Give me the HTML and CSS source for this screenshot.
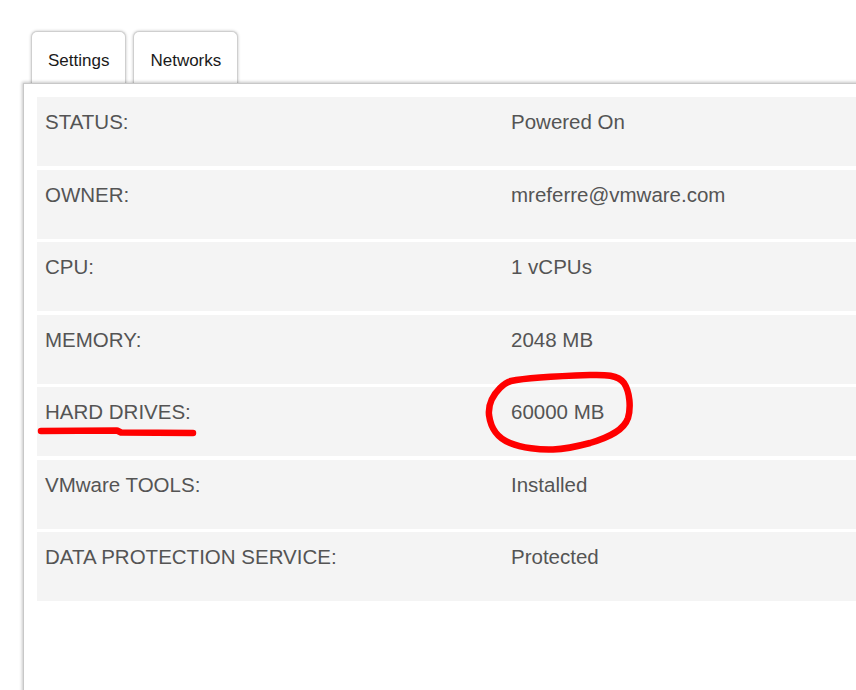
FILE: index.html
```html
<!DOCTYPE html>
<html>
<head>
<meta charset="utf-8">
<link rel="stylesheet" href="styles.css">
</head>
<body>
<div class="page">
  <div class="tabs">
    <div class="tab active">Settings</div>
    <div class="tab">Networks</div>
  </div>
  <div class="panel">
    <div class="rows">
      <div class="row"><div class="label">STATUS:</div><div class="value">Powered On</div></div>
      <div class="row"><div class="label">OWNER:</div><div class="value">mreferre@vmware.com</div></div>
      <div class="row"><div class="label">CPU:</div><div class="value">1 vCPUs</div></div>
      <div class="row"><div class="label">MEMORY:</div><div class="value">2048 MB</div></div>
      <div class="row"><div class="label">HARD DRIVES:</div><div class="value">60000 MB</div></div>
      <div class="row"><div class="label">VMware TOOLS:</div><div class="value">Installed</div></div>
      <div class="row"><div class="label">DATA PROTECTION SERVICE:</div><div class="value">Protected</div></div>
    </div>
  </div>
  <svg class="marks" width="856" height="690" viewBox="0 0 856 690">
    <path d="M41 431 L117 430.5 L121 432.5 L193 433" fill="none" stroke="#ff0000" stroke-width="6.5" stroke-linecap="round" stroke-linejoin="round"/>
    <path d="M511 381 C525 378 560 376 590 375 C605 374.5 618 375 624 383 C630 392 631 408 628 418 C624 430 610 437 590 443 C575 447 565 449 553 449.5 C540 450 522 448 510 443 C498 438 491 430 489 415 C488 404 492 396 500 388 C504 384 507 382 511 381 Z" fill="none" stroke="#ff0000" stroke-width="6.5" stroke-linejoin="round"/>
  </svg>
</div>
</body>
</html>
```

FILE: styles.css
```css
html, body {
  margin: 0;
  padding: 0;
  background: #ffffff;
  overflow: hidden;
}
.page {
  position: relative;
  width: 856px;
  height: 690px;
  overflow: hidden;
  font-family: "Liberation Sans", Arial, Helvetica, sans-serif;
}
.tabs {
  display: flex;
  gap: 7px;
  padding: 31px 0 0 31px;
  height: 52px;
  box-sizing: content-box;
}
.tab {
  box-sizing: border-box;
  height: 53px;
  padding: 19px 16px 0 16px;
  border: 1px solid #cfcfcf;
  border-bottom: none;
  border-radius: 6px 6px 0 0;
  background: #ffffff;
  box-shadow: 0 0 3px rgba(0, 0, 0, 0.25);
  font-size: 17px;
  line-height: 20px;
  color: #1a1a1a;
}
.panel {
  position: relative;
  margin-left: 23px;
  width: 900px;
  height: 620px;
  background: #ffffff;
  border-top: 1px solid #c8c8c8;
  border-left: 1px solid #c8c8c8;
  box-shadow: -1px -1px 3px rgba(0, 0, 0, 0.22);
  padding: 13px 0 0 13px;
  box-sizing: border-box;
}
.rows {
  display: flex;
  flex-direction: column;
  gap: 3.5px;
}
.row {
  display: grid;
  grid-template-columns: 466px 1fr;
  height: 69px;
  background: #f4f4f4;
  box-sizing: border-box;
  padding: 12px 8px 0 8px;
  font-size: 20.5px;
  line-height: 25px;
  color: #545454;
}
.marks {
  position: absolute;
  left: 0;
  top: 0;
  pointer-events: none;
}
```
